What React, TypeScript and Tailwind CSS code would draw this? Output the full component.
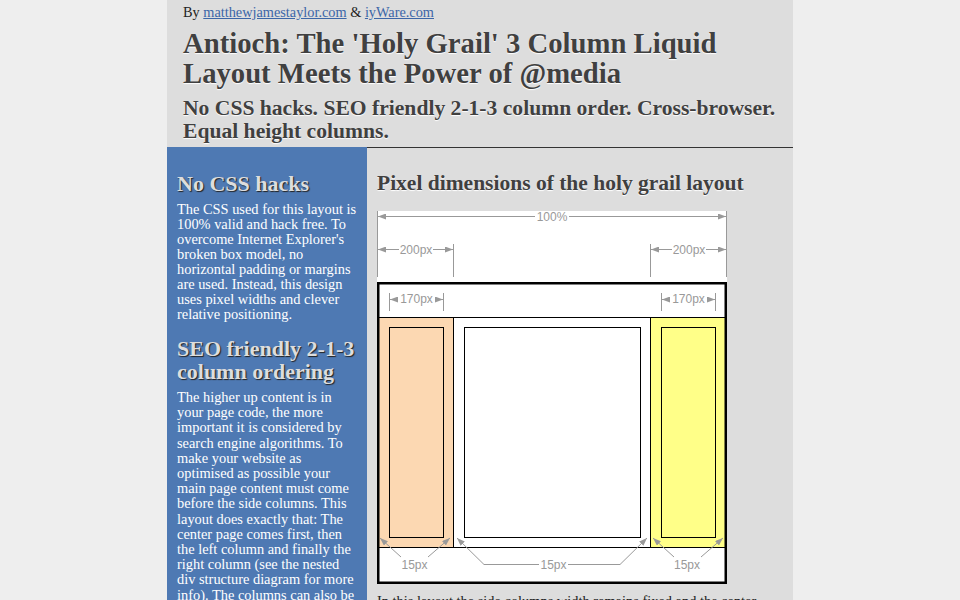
import React from 'react';

const SERIF = "font-['Liberation_Serif','Times_New_Roman',serif]";

function Diagram() {
  const dim = '#999';
  return (
    <svg width="350" height="373" viewBox="0 0 350 373" className="block">
      <defs>
        <marker id="arr" viewBox="0 0 8 6" refX="8" refY="3" markerWidth="8" markerHeight="6" orient="auto-start-reverse">
          <path d="M0,0 L8,3 L0,6 z" fill={dim} />
        </marker>
      </defs>
      <rect x="0" y="0" width="350" height="373" fill="#fff" />

      {/* 100% */}
      <g stroke={dim} strokeWidth="1" fill="none">
        <line x1="0.5" y1="0" x2="0.5" y2="66" />
        <line x1="349.5" y1="0" x2="349.5" y2="66" />
        <line x1="1" y1="5.5" x2="158" y2="5.5" markerStart="url(#arr)" />
        <line x1="192" y1="5.5" x2="349" y2="5.5" markerEnd="url(#arr)" />
        {/* 200px */}
        <line x1="76.5" y1="33" x2="76.5" y2="66" />
        <line x1="273.5" y1="33" x2="273.5" y2="66" />
        <line x1="1" y1="38.5" x2="22" y2="38.5" markerStart="url(#arr)" />
        <line x1="56" y1="38.5" x2="76" y2="38.5" markerEnd="url(#arr)" />
        <line x1="274" y1="38.5" x2="295" y2="38.5" markerStart="url(#arr)" />
        <line x1="329" y1="38.5" x2="349" y2="38.5" markerEnd="url(#arr)" />
      </g>
      <g fill={dim} fontFamily="'Liberation Sans', Arial, sans-serif" fontSize="12" textAnchor="middle">
        <text x="175" y="9.5">100%</text>
        <text x="39" y="42.5">200px</text>
        <text x="312" y="42.5">200px</text>
      </g>

      {/* frame */}
      <rect x="78" y="106" width="196" height="230" fill="#fff" />
      <rect x="1" y="106" width="76" height="230" fill="#fcd8b2" />
      <rect x="274" y="106" width="75" height="230" fill="#ffff88" />
      <g stroke="#000" strokeWidth="1" fill="none">
        <line x1="1" y1="106.5" x2="349" y2="106.5" />
        <line x1="1" y1="336.5" x2="349" y2="336.5" />
        <line x1="76.5" y1="106" x2="76.5" y2="336" />
        <line x1="273.5" y1="106" x2="273.5" y2="336" />
        <rect x="12.5" y="116.5" width="54" height="210" />
        <rect x="87.5" y="116.5" width="176" height="210" />
        <rect x="284.5" y="116.5" width="54" height="210" />
      </g>
      <rect x="1.25" y="72.25" width="347.5" height="299.5" fill="none" stroke="#000" strokeWidth="2.5" />

      {/* 170px */}
      <g stroke={dim} strokeWidth="1" fill="none">
        <line x1="12.5" y1="82" x2="12.5" y2="100" />
        <line x1="66.5" y1="82" x2="66.5" y2="100" />
        <line x1="13" y1="88.5" x2="20" y2="88.5" markerStart="url(#arr)" />
        <line x1="58" y1="88.5" x2="66" y2="88.5" markerEnd="url(#arr)" />
        <line x1="284.5" y1="82" x2="284.5" y2="100" />
        <line x1="338.5" y1="82" x2="338.5" y2="100" />
        <line x1="285" y1="88.5" x2="292" y2="88.5" markerStart="url(#arr)" />
        <line x1="330" y1="88.5" x2="338" y2="88.5" markerEnd="url(#arr)" />
      </g>
      <g fill={dim} fontFamily="'Liberation Sans', Arial, sans-serif" fontSize="12" textAnchor="middle">
        <text x="39.5" y="92">170px</text>
        <text x="311.5" y="92">170px</text>
      </g>

      {/* 15px */}
      <g stroke={dim} strokeWidth="1" fill="none">
        <line x1="24" y1="346" x2="3" y2="327" markerEnd="url(#arr)" />
        <line x1="51" y1="346" x2="73" y2="327" markerEnd="url(#arr)" />
        <polyline points="162,353.5 107,353.5 80,327" markerEnd="url(#arr)" />
        <polyline points="191,353.5 243,353.5 270,327" markerEnd="url(#arr)" />
        <line x1="297" y1="346" x2="276" y2="327" markerEnd="url(#arr)" />
        <line x1="324" y1="346" x2="346" y2="327" markerEnd="url(#arr)" />
      </g>
      <g fill={dim} fontFamily="'Liberation Sans', Arial, sans-serif" fontSize="12" textAnchor="middle">
        <text x="37.5" y="358">15px</text>
        <text x="176.5" y="358">15px</text>
        <text x="310" y="358">15px</text>
      </g>
    </svg>
  );
}

export default function App() {
  return (
    <div className={`min-h-screen bg-[#eeeeee] ${SERIF}`}>
      <div className="mx-auto w-[626px] bg-[#dddddd] text-[#444]">
        {/* Header */}
        <header className="px-4 pt-1 pb-1">
          <p className="text-[14.3px] leading-[17px] text-[#222]">
            By <a href="#" className="text-[#3c66a8] underline">matthewjamestaylor.com</a> &amp;{' '}
            <a href="#" className="text-[#3c66a8] underline">iyWare.com</a>
          </p>
          <h1 className="mt-[7px] text-[28.7px] leading-[30px] font-bold text-[#404040] [text-shadow:0_1px_1px_#fff]">
            Antioch: The 'Holy Grail' 3 Column Liquid Layout Meets the Power of @media
          </h1>
          <h2 className="mt-[9px] text-[21.6px] leading-[23px] font-bold text-[#404040] [text-shadow:0_1px_1px_#fff]">
            No CSS hacks. SEO friendly 2-1-3 column order. Cross-browser. Equal height columns.
          </h2>
        </header>

        <div className="flex">
          {/* Left column */}
          <aside className="w-[200px] shrink-0 bg-[#4e79b3] px-[10px] pt-[25px]">
            <h2 className="text-[22px] leading-[23px] font-bold text-[#dddddd] [text-shadow:1px_1px_1px_#222]">
              No CSS hacks
            </h2>
            <p className="mt-[7px] text-[14.4px] leading-[15px] text-white">
              The CSS used for this layout is 100% valid and hack free. To overcome Internet Explorer's broken box model, no horizontal padding or margins are used. Instead, this design uses pixel widths and clever relative positioning.
            </p>
            <h2 className="mt-[15px] text-[22px] leading-[23px] font-bold text-[#dddddd] [text-shadow:1px_1px_1px_#222]">
              SEO friendly 2-1-3 column ordering
            </h2>
            <p className="mt-[7px] text-[14.4px] leading-[15.2px] text-white">
              The higher up content is in your page code, the more important it is considered by search engine algorithms. To make your website as optimised as possible your main page content must come before the side columns. This layout does exactly that: The center page comes first, then the left column and finally the right column (see the nested div structure diagram for more info). The columns can also be configured to any other order if required.
            </p>
          </aside>

          {/* Main column */}
          <main className="flex-1 border-t border-[#333] px-[10px] pt-[24px]">
            <h2 className="text-[21.5px] leading-[23px] font-bold text-[#404040] [text-shadow:0_1px_1px_#fff]">
              Pixel dimensions of the holy grail layout
            </h2>
            <div className="mt-[16px]">
              <Diagram />
            </div>
            <p className="mt-[10px] text-[14.4px] leading-[15.2px] text-[#222]">
              In this layout the side columns width remains fixed and the center column stretches to fill the remaining space of the browser window.
            </p>
          </main>
        </div>
      </div>
    </div>
  );
}
